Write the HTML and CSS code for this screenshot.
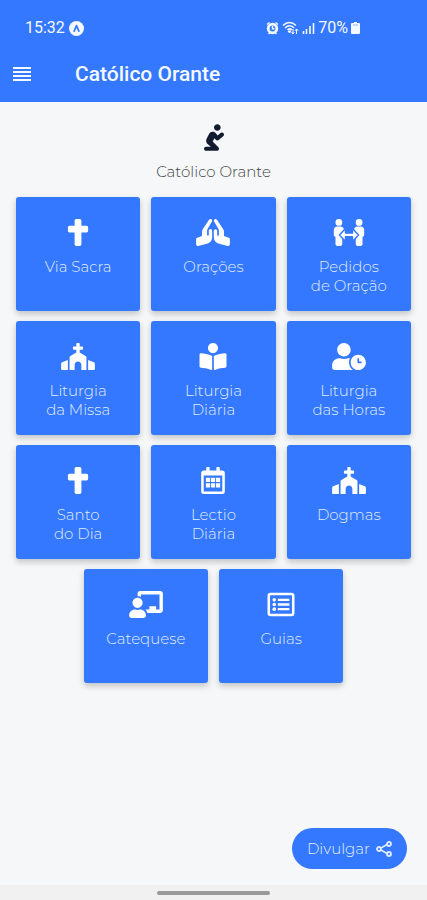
FILE: index.html
```html
<!DOCTYPE html>
<html lang="pt-BR">
<head>
    <meta charset="UTF-8">
    <meta name="viewport" content="width=device-width, initial-scale=1.0">
    <title>Católico Orante</title>
    <link rel="stylesheet" href="styles.css">
</head>
<body>
    <!-- Shared icons -->
    <svg class="sprite" aria-hidden="true">
        <symbol id="cross" viewBox="0 0 384 512">
            <path d="M352 128h-96V32c0-17.67-14.33-32-32-32h-64c-17.67 0-32 14.33-32 32v96H32c-17.67 0-32 14.33-32 32v64c0 17.67 14.33 32 32 32h96v224c0 17.67 14.33 32 32 32h64c17.67 0 32-14.33 32-32V256h96c17.67 0 32-14.33 32-32v-64c0-17.67-14.33-32-32-32z"/>
        </symbol>
        <symbol id="church" viewBox="0 0 640 512">
            <path d="M464.46 246.68L352 179.2V128h48c8.84 0 16-7.16 16-16V80c0-8.84-7.16-16-16-16h-48V16c0-8.84-7.16-16-16-16h-32c-8.84 0-16 7.16-16 16v48h-48c-8.84 0-16 7.16-16 16v32c0 8.84 7.16 16 16 16h48v51.2l-112.46 67.48A31.997 31.997 0 0 0 160 274.12V512h96v-96c0-35.35 28.65-64 64-64s64 28.65 64 64v96h96V274.12c0-11.24-5.9-21.66-15.54-27.44zM0 395.96V496c0 8.84 7.16 16 16 16h112V320L19.39 366.54A32.024 32.024 0 0 0 0 395.96zm620.61-29.42L512 320v192h112c8.84 0 16-7.16 16-16V395.96c0-12.8-7.63-24.37-19.39-29.42z"/>
        </symbol>
    </svg>

    <header class="header">
        <div class="status-bar">
            <div class="status-group">
                <span>15:32</span>
                <svg class="status-app" viewBox="0 0 16 16">
                    <circle cx="8" cy="8" r="8" fill="currentColor"/>
                    <path d="M5.5 10.8L8 5l2.500 5.800" fill="none" stroke="#3378ff" stroke-width="1.800" stroke-linecap="round" stroke-linejoin="round"/>
                </svg>
            </div>
            <div class="status-group status-right">
                <svg class="status-alarm" viewBox="0 0 13 14">
                    <circle cx="6.500" cy="7.500" r="4.300" fill="none" stroke="currentColor" stroke-width="2.800"/>
                    <path d="M6.500 5v2.800h2M1 3.500L3.500 1.500M12 3.500L9.500 1.500M2.500 13l1.500-1.500M10.500 13L9 11.500" fill="none" stroke="currentColor" stroke-width="1.500"/>
                </svg>
                <svg class="status-wifi" viewBox="0 0 17 14">
                    <path d="M1 4.500C5 .5 10 .5 14 4.500M3 7C6 4 9.500 4 12 7M5.500 9c1.500-1.500 3-1.500 4.500 0" fill="none" stroke="currentColor" stroke-width="1.500"/>
                    <path d="M7.500 12L6 10h3zM11 8v5M9.500 11.500L11 13l1.200-1.500M14.500 13V8M13 9.500L14.500 8 16 9.500" fill="currentColor" stroke="currentColor"/>
                </svg>
                <svg class="status-signal" viewBox="0 0 13 14">
                    <path d="M1.500 10v3M4.500 8v5M8 5v8M11.500 2v11" stroke="currentColor" stroke-width="1.600"/>
                </svg>
                <span>70%</span>
                <svg class="status-battery" viewBox="0 0 9 14">
                    <path d="M3 1h3v1h2q1 0 1 1v9q0 1-1 1H1q-1 0-1-1V3q0-1 1-1h2z" fill="currentColor"/>
                    <path d="M2 4h5" stroke="#8fb6ff"/>
                </svg>
            </div>
        </div>
        <div class="app-bar">
            <button class="menu-button" type="button" aria-label="Menu">
                <svg viewBox="0 0 18 14"><path d="M0 1h18M0 5h18M0 9h18M0 13h18" stroke="currentColor" stroke-width="2"/></svg>
            </button>
            <h1 class="app-title">Católico Orante</h1>
        </div>
    </header>

    <main class="content">
        <div class="brand">
            <svg class="brand-icon" viewBox="0 0 384 512"><path d="M256 128c35.35 0 64-28.65 64-64S291.35 0 256 0s-64 28.65-64 64 28.65 64 64 64zm-30.63 169.75c14.06 16.72 39 19.09 55.97 5.22l88-72.02c17.09-13.98 19.59-39.19 5.62-56.28-13.97-17.11-39.19-19.59-56.31-5.62l-57.44 47-38.91-46.31c-15.44-18.39-39.22-27.92-64-25.33-24.19 2.48-45.25 16.27-56.37 36.92l-49.37 92.03c-23.4 43.64-8.69 96.37 34.19 123.75L131.56 432H40c-22.09 0-40 17.91-40 40s17.91 40 40 40h208c34.08 0 53.77-42.79 28.28-68.28L166.42 333.86l34.8-64.87 24.15 28.76z"/></svg>
            <p class="brand-name">Católico Orante</p>
        </div>

        <nav class="grid">
            <a class="card" href="#via-sacra">
                <svg class="card-icon"><use href="#cross"/></svg>
                <span>Via Sacra</span>
            </a>
            <a class="card" href="#oracoes">
                <svg class="card-icon" viewBox="0 0 640 512"><path d="M272 191.910c-17.600 0-32 14.400-32 32v80c0 8.840-7.160 16-16 16s-16-7.160-16-16v-76.550c0-17.390 4.720-34.470 13.690-49.390l77.750-129.590c9.090-15.160 4.190-34.810-10.970-43.910-14.450-8.670-32.720-4.300-42.300 9.210-.2.230-.62.210-.79.480l-117.260 175.900C117.560 205.900 112 224.310 112 243.290v80.230l-90.120 30.040A31.974 31.974 0 0 0 0 383.910v96c0 10.820 8.520 32 32 32 2.690 0 5.410-.34 8.060-1.030l179.190-46.620C269.160 449.990 304 403.800 304 351.910v-128c0-17.600-14.400-32-32-32zm346.120 161.730L528 323.600v-80.230c0-18.980-5.560-37.390-16.120-53.230L394.620 14.250c-.18-.27-.59-.24-.79-.48-9.580-13.510-27.850-17.880-42.300-9.210-15.160 9.090-20.060 28.750-10.970 43.910l77.750 129.590c8.970 14.920 13.690 32 13.690 49.390V304c0 8.840-7.160 16-16 16s-16-7.160-16-16v-80c0-17.600-14.400-32-32-32s-32 14.400-32 32v128c0 51.890 34.840 98.080 84.750 112.340l179.190 46.620c2.660.69 5.380 1.030 8.060 1.030 23.480 0 32-21.180 32-32v-96c0-13.770-8.810-25.990-21.880-30.350z"/></svg>
                <span>Orações</span>
            </a>
            <a class="card" href="#pedidos">
                <svg class="card-icon" viewBox="0 0 640 512">
                    <circle cx="128" cy="64" r="64"/>
                    <circle cx="512" cy="64" r="64"/>
                    <path d="M96 144h64c36 0 64 26 64 60v44l-54 54 22 28v146c0 20-14 36-34 36H98c-20 0-34-16-34-36V338c-20-4-32-20-32-38v-92c0-36 28-64 64-64zM544 144h-64c-36 0-64 26-64 60v44l54 54-22 28v146c0 20 14 36 34 36h60c20 0 34-16 34-36V338c20-4 32-20 32-38v-92c0-36-28-64-64-64z"/>
                    <path d="M140 302l96-104q18-6 18 14v54h132v-54q0-20 18-14l96 104-96 104q-18 6-18-14v-54H254v54q0 20-18 14z" stroke="#3378ff" stroke-width="28" stroke-linejoin="round"/>
                </svg>
                <span>Pedidos<br>de Oração</span>
            </a>
            <a class="card" href="#liturgia-missa">
                <svg class="card-icon"><use href="#church"/></svg>
                <span>Liturgia<br>da Missa</span>
            </a>
            <a class="card" href="#liturgia-diaria">
                <svg class="card-icon" viewBox="0 0 512 512"><path d="M352 96c0-53.020-42.980-96-96-96s-96 42.980-96 96 42.980 96 96 96 96-42.980 96-96zM233.590 241.100c-59.330-36.320-155.430-46.300-203.790-49.050C13.550 191.130 0 203.510 0 219.140v222.800c0 14.330 11.590 26.280 26.490 27.050 43.660 2.290 131.990 10.680 193.040 41.430 9.370 4.720 20.480-1.710 20.480-11.870V252.560c-.01-4.670-2.320-8.950-6.420-11.460zm248.610-49.050c-48.350 2.740-144.460 12.730-203.780 49.050-4.100 2.510-6.410 6.960-6.410 11.630v245.790c0 10.190 11.140 16.630 20.540 11.900 61.040-30.720 149.320-39.110 192.970-41.400 14.900-.78 26.490-12.730 26.490-27.060V219.140c-.01-15.630-13.560-28.010-29.810-27.090z"/></svg>
                <span>Liturgia<br>Diária</span>
            </a>
            <a class="card" href="#liturgia-horas">
                <svg class="card-icon" viewBox="0 0 640 512"><path d="M496 224c-79.600 0-144 64.400-144 144s64.400 144 144 144 144-64.400 144-144-64.400-144-144-144zm64 150.300c0 5.300-4.400 9.700-9.700 9.700h-60.600c-5.300 0-9.700-4.400-9.700-9.700v-76.600c0-5.300 4.400-9.700 9.700-9.700h12.600c5.300 0 9.700 4.400 9.700 9.700V352h38.300c5.300 0 9.700 4.400 9.700 9.700v12.600zM320 368c0-27.800 6.700-54.100 18.200-77.500-8-1.500-16.200-2.500-24.600-2.500h-16.700c-22.200 10.200-46.900 16-72.900 16s-50.600-5.800-72.900-16h-16.700C60.200 288 0 348.200 0 422.400V464c0 26.500 21.500 48 48 48h347.100c-45.300-31.900-75.100-84.500-75.100-144zm-96-112c70.700 0 128-57.300 128-128S294.700 0 224 0 96 57.300 96 128s57.300 128 128 128z"/></svg>
                <span>Liturgia<br>das Horas</span>
            </a>
            <a class="card" href="#santo-do-dia">
                <svg class="card-icon"><use href="#cross"/></svg>
                <span>Santo<br>do Dia</span>
            </a>
            <a class="card" href="#lectio">
                <svg class="card-icon" viewBox="0 0 448 512">
                    <path fill-rule="evenodd" d="M48 64h48V16q0-16 16-16h32q16 0 16 16v48h128V16q0-16 16-16h32q16 0 16 16v48h48q48 0 48 48v352q0 48-48 48H48q-48 0-48-48V112q0-48 48-48zM48 160v298q0 6 6 6h340q6 0 6-6V160z"/>
                    <path d="M88 206h80v80H88zM184 206h80v80h-80zM280 206h80v80h-80zM88 310h80v80H88zM184 310h80v80h-80zM280 310h80v80h-80z"/>
                </svg>
                <span>Lectio<br>Diária</span>
            </a>
            <a class="card" href="#dogmas">
                <svg class="card-icon"><use href="#church"/></svg>
                <span>Dogmas</span>
            </a>
            <a class="card" href="#catequese">
                <svg class="card-icon" viewBox="0 0 640 512"><path d="M208 352c-2.390 0-4.780.35-7.060 1.090C187.980 357.300 174.350 360 160 360c-14.350 0-27.980-2.700-40.950-6.910-2.280-.74-4.660-1.090-7.050-1.090C49.940 352-.33 402.480 0 464.620.14 490.880 21.730 512 48 512h224c26.270 0 47.860-21.120 48-47.380.33-62.140-49.940-112.620-112-112.620zm-48-32c53.020 0 96-42.980 96-96s-42.980-96-96-96-96 42.980-96 96 42.980 96 96 96zM592 0H208c-26.470 0-48 22.250-48 49.590V96c23.420 0 45.100 6.780 64 17.800V64h352v288h-64v-64H384v64h-76.240c19.100 16.690 33.120 38.730 39.690 64H592c26.470 0 48-22.250 48-49.590V49.590C640 22.250 618.470 0 592 0z"/></svg>
                <span>Catequese</span>
            </a>
            <a class="card" href="#guias">
                <svg class="card-icon" viewBox="0 0 512 512">
                    <rect x="24" y="56" width="464" height="400" rx="32" fill="none" stroke="currentColor" stroke-width="48"/>
                    <path d="M196 168h220M196 256h220M196 344h220" stroke="currentColor" stroke-width="44"/>
                    <circle cx="128" cy="168" r="34"/>
                    <circle cx="128" cy="256" r="34"/>
                    <circle cx="128" cy="344" r="34"/>
                </svg>
                <span>Guias</span>
            </a>
        </nav>

        <button class="share-button" type="button">
            Divulgar
            <svg class="share-icon" viewBox="0 0 16 16">
                <path d="M5 7l6-3.500M5 9l6 3.500" stroke="currentColor" stroke-width="1.500"/>
                <g fill="none" stroke="currentColor" stroke-width="1.800">
                    <circle cx="3" cy="8" r="2"/>
                    <circle cx="13" cy="3" r="2"/>
                    <circle cx="13" cy="13" r="2"/>
                </g>
            </svg>
        </button>
    </main>

    <footer class="gesture-bar">
        <div class="gesture-handle"></div>
    </footer>
</body>
</html>
```
FILE: styles.css
```css
* {
    box-sizing: border-box;
}

body {
    margin: 0;
    min-height: 100vh;
    display: flex;
    flex-direction: column;
    background-color: #f5f7f9;
    color: #444;
    font-family: Montserrat, Inter, sans-serif;
    font-size: 15px;
    font-weight: 300;
}

.sprite {
    display: none;
}

/* Header */
.header {
    background-color: #3378ff;
    color: #f4f8ff;
    font-family: Roboto, sans-serif;
}

.status-bar {
    display: flex;
    justify-content: space-between;
    padding: 18px 67px 0 25px;
    font-size: 16px;
    font-weight: 400;
    line-height: 20px;
}

.status-group {
    display: flex;
    align-items: center;
    gap: 4px;
}

.status-right {
    gap: 3px;
}

.status-right svg {
    height: 14px;
}

.status-app {
    width: 15px;
    height: 15px;
}

.status-alarm,
.status-signal {
    width: 13px;
}

.status-wifi {
    width: 17px;
}

.status-battery {
    width: 9px;
}

.app-bar {
    display: flex;
    align-items: center;
    gap: 44px;
    height: 64px;
    padding: 8px 13px 0;
}

.menu-button {
    display: flex;
    padding: 0;
    border: 0;
    background: none;
    color: inherit;
    cursor: pointer;
}

.menu-button svg {
    width: 18px;
    height: 14px;
}

.app-title {
    margin: 0;
    font-size: 21px;
    font-weight: 500;
}

/* Content */
.content {
    flex: 1;
    display: flex;
    flex-direction: column;
    padding: 22px 16px 16px;
}

.brand {
    display: flex;
    flex-direction: column;
    align-items: center;
    gap: 11px;
    margin-bottom: 15px;
}

.brand-icon {
    width: 20px;
    height: 27px;
    fill: #131b2e;
}

.brand-name {
    margin: 0;
    line-height: 20px;
}

.grid {
    display: flex;
    flex-wrap: wrap;
    justify-content: center;
    gap: 10px 11px;
    margin-bottom: 24px;
}

.card {
    display: flex;
    flex-direction: column;
    align-items: center;
    gap: 11px;
    width: calc((100% - 22px) / 3);
    min-height: 114px;
    padding: 22px 4px 12px;
    border-radius: 3px;
    background-color: #3378ff;
    box-shadow: 0 3px 6px rgba(0, 0, 0, 0.22);
    color: #e0ecff;
    line-height: 19px;
    text-align: center;
    text-decoration: none;
}

.card-icon {
    width: 34px;
    height: 27px;
    color: #fff;
    fill: #fff;
}

.share-button {
    display: flex;
    align-items: center;
    gap: 6px;
    height: 41px;
    margin: auto 4px 0 auto;
    padding: 0 15px;
    border: 0;
    border-radius: 21px;
    background-color: #3378ff;
    color: #e0ecff;
    font: inherit;
    cursor: pointer;
}

.share-icon {
    width: 16px;
    height: 16px;
}

.gesture-bar {
    display: flex;
    justify-content: center;
    padding: 6px 0 5px;
    background-color: #f1f1f1;
}

.gesture-handle {
    width: 113px;
    height: 4px;
    border-radius: 2px;
    background-color: #9a9a9a;
}
```
